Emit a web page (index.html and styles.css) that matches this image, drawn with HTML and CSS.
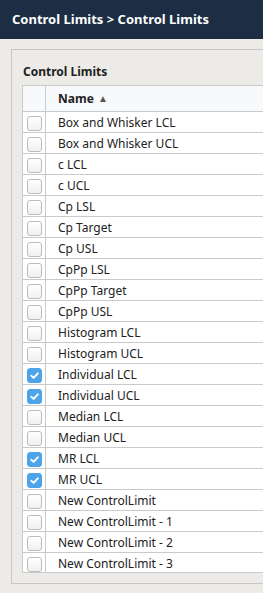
FILE: index.html
```html
<!DOCTYPE html>
<html lang="en">
<head>
    <meta charset="UTF-8">
    <meta name="viewport" content="width=device-width, initial-scale=1.0">
    <title>Control Limits</title>
    <link rel="stylesheet" href="styles.css">
</head>
<body>
    <div class="topbar">Control Limits &gt; Control Limits</div>

    <div class="panel">
        <div class="panel-title">Control Limits</div>
        <div class="grid">
            <table>
                <thead>
                    <tr>
                        <th class="check-col"></th>
                        <th>Name <span class="sort">&#9650;</span></th>
                    </tr>
                </thead>
                <tbody>
                    <tr><td class="check-col"><span class="box"></span></td><td>Box and Whisker LCL</td></tr>
                    <tr><td class="check-col"><span class="box"></span></td><td>Box and Whisker UCL</td></tr>
                    <tr><td class="check-col"><span class="box"></span></td><td>c LCL</td></tr>
                    <tr><td class="check-col"><span class="box"></span></td><td>c UCL</td></tr>
                    <tr><td class="check-col"><span class="box"></span></td><td>Cp LSL</td></tr>
                    <tr><td class="check-col"><span class="box"></span></td><td>Cp Target</td></tr>
                    <tr><td class="check-col"><span class="box"></span></td><td>Cp USL</td></tr>
                    <tr><td class="check-col"><span class="box"></span></td><td>CpPp LSL</td></tr>
                    <tr><td class="check-col"><span class="box"></span></td><td>CpPp Target</td></tr>
                    <tr><td class="check-col"><span class="box"></span></td><td>CpPp USL</td></tr>
                    <tr><td class="check-col"><span class="box"></span></td><td>Histogram LCL</td></tr>
                    <tr><td class="check-col"><span class="box"></span></td><td>Histogram UCL</td></tr>
                    <tr><td class="check-col"><span class="box checked"><svg viewBox="0 0 14 14"><path d="M3.5 7.2 L6 9.6 L10.6 4.6"/></svg></span></td><td>Individual LCL</td></tr>
                    <tr><td class="check-col"><span class="box checked"><svg viewBox="0 0 14 14"><path d="M3.5 7.2 L6 9.6 L10.6 4.6"/></svg></span></td><td>Individual UCL</td></tr>
                    <tr><td class="check-col"><span class="box"></span></td><td>Median LCL</td></tr>
                    <tr><td class="check-col"><span class="box"></span></td><td>Median UCL</td></tr>
                    <tr><td class="check-col"><span class="box checked"><svg viewBox="0 0 14 14"><path d="M3.5 7.2 L6 9.6 L10.6 4.6"/></svg></span></td><td>MR LCL</td></tr>
                    <tr><td class="check-col"><span class="box checked"><svg viewBox="0 0 14 14"><path d="M3.5 7.2 L6 9.6 L10.6 4.6"/></svg></span></td><td>MR UCL</td></tr>
                    <tr><td class="check-col"><span class="box"></span></td><td>New ControlLimit</td></tr>
                    <tr><td class="check-col"><span class="box"></span></td><td>New ControlLimit - 1</td></tr>
                    <tr><td class="check-col"><span class="box"></span></td><td>New ControlLimit - 2</td></tr>
                    <tr><td class="check-col"><span class="box"></span></td><td>New ControlLimit - 3</td></tr>
                </tbody>
            </table>
        </div>
    </div>
</body>
</html>
```

FILE: styles.css
```css
html {
    overflow: hidden;
}
body {
    margin: 0;
    font-family: "Noto Sans", "Open Sans", sans-serif;
    background-color: #ecebe7;
    color: #222;
}
.topbar {
    height: 39px;
    line-height: 39px;
    padding-left: 12px;
    background-color: #1b2e44;
    color: #fff;
    font-size: 13px;
    font-weight: bold;
    white-space: nowrap;
}
.panel {
    margin: 10px 0 0 11px;
    width: 320px;
    border: 1px solid #c6c6c4;
    padding: 0 10px 10px 10px;
}
.panel-title {
    font-size: 12px;
    font-weight: bold;
    line-height: 16px;
    padding: 14px 1px 5px 1px;
}
.grid {
    height: 487px;
    overflow: hidden;
    border-bottom: 1px solid #c8cacc;
}
table {
    width: 100%;
    border-collapse: collapse;
    font-size: 12px;
}
th, td {
    border: 1px solid #c8cacc;
    text-align: left;
    padding: 0 12px;
    white-space: nowrap;
}
th {
    height: 25px;
    background-color: #f8f9fb;
    font-weight: bold;
}
td {
    height: 20px;
    background-color: #fff;
}
.check-col {
    width: 22px;
    padding: 0;
    text-align: center;
}
.sort {
    font-size: 10px;
    color: #555;
    position: relative;
    top: -1px;
    margin-left: 1px;
}
.box {
    display: inline-block;
    box-sizing: border-box;
    width: 15px;
    height: 15px;
    border: 1px solid #bcbcbc;
    border-radius: 3px;
    background: linear-gradient(#ffffff, #f0f0f0);
    vertical-align: middle;
}
.box.checked {
    border-color: #4ea4e9;
    background: #4ea4e9;
}
.box svg {
    display: block;
    width: 13px;
    height: 13px;
}
.box svg path {
    fill: none;
    stroke: #fff;
    stroke-width: 2;
    stroke-linecap: round;
    stroke-linejoin: round;
}
```
